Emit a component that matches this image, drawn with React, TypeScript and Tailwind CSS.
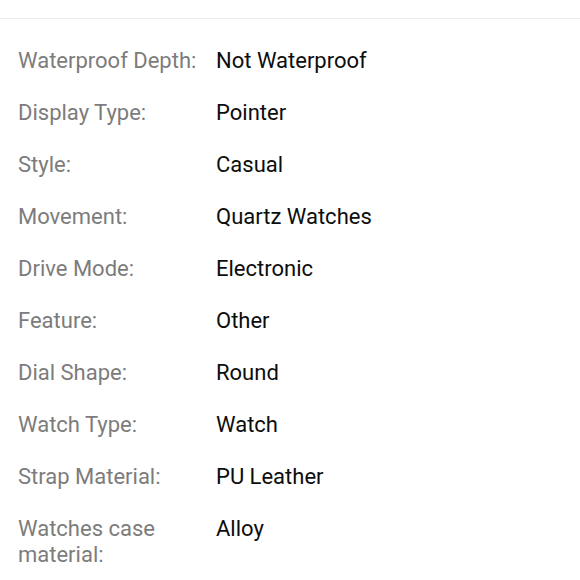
import React from 'react';

const specs: Array<{ label: string; value: string }> = [
  { label: 'Waterproof Depth:', value: 'Not Waterproof' },
  { label: 'Display Type:', value: 'Pointer' },
  { label: 'Style:', value: 'Casual' },
  { label: 'Movement:', value: 'Quartz Watches' },
  { label: 'Drive Mode:', value: 'Electronic' },
  { label: 'Feature:', value: 'Other' },
  { label: 'Dial Shape:', value: 'Round' },
  { label: 'Watch Type:', value: 'Watch' },
  { label: 'Strap Material:', value: 'PU Leather' },
  { label: 'Watches case material:', value: 'Alloy' },
];

const App: React.FC = () => {
  return (
    <div className="w-[580px] h-[580px] bg-white overflow-hidden" style={{ fontFamily: 'Roboto, "Liberation Sans", sans-serif' }}>
      <div className="h-[18px]" />
      <div className="border-t border-[#ececec] pt-[16px] pl-[18px]">
        {specs.map((spec) => (
          <div key={spec.label} className="flex py-[13px] text-[22px] leading-[26px]">
            <div className="w-[198px] shrink-0 pr-[16px] text-[#7c7c7c]">{spec.label}</div>
            <div className="text-[#0d0d0d]">{spec.value}</div>
          </div>
        ))}
      </div>
    </div>
  );
};

export default App;
